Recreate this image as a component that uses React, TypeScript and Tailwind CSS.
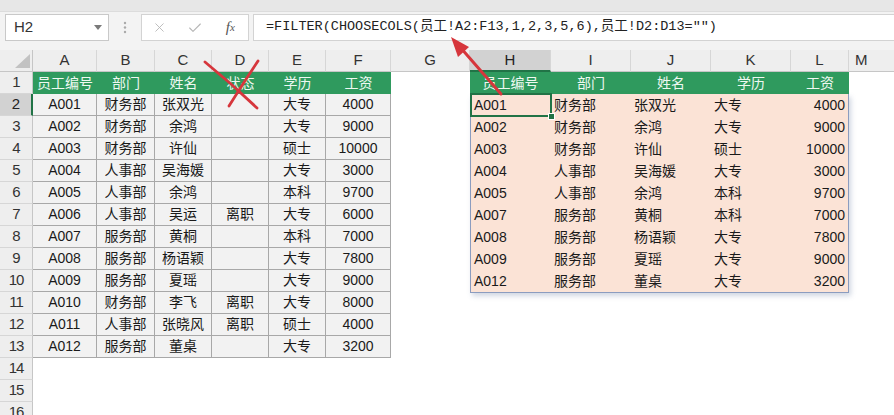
import React from 'react';
import { X, Check } from 'lucide-react';

const cellFont = "font-['Liberation_Sans','Noto_Sans_CJK_SC',sans-serif]";

const colHeaders: { label: string; w: string; active?: boolean }[] = [
  { label: 'A', w: 'w-[64px]' },
  { label: 'B', w: 'w-[58px]' },
  { label: 'C', w: 'w-[57px]' },
  { label: 'D', w: 'w-[57px]' },
  { label: 'E', w: 'w-[57px]' },
  { label: 'F', w: 'w-[65px]' },
  { label: 'G', w: 'w-[79px]' },
  { label: 'H', w: 'w-[81px]', active: true },
  { label: 'I', w: 'w-[80px]' },
  { label: 'J', w: 'w-[80px]' },
  { label: 'K', w: 'w-[80px]' },
  { label: 'L', w: 'w-[58px]' },
];

const leftW = ['w-[64px]', 'w-[58px]', 'w-[57px]', 'w-[57px]', 'w-[57px]', 'w-[65px]'];
const leftHead = ['员工编号', '部门', '姓名', '状态', '学历', '工资'];
const leftData: string[][] = [
  ['A001', '财务部', '张双光', '', '大专', '4000'],
  ['A002', '财务部', '余鸿', '', '大专', '9000'],
  ['A003', '财务部', '许仙', '', '硕士', '10000'],
  ['A004', '人事部', '吴海媛', '', '大专', '3000'],
  ['A005', '人事部', '余鸿', '', '本科', '9700'],
  ['A006', '人事部', '吴运', '离职', '大专', '6000'],
  ['A007', '服务部', '黄桐', '', '本科', '7000'],
  ['A008', '服务部', '杨语颖', '', '大专', '7800'],
  ['A009', '服务部', '夏瑶', '', '大专', '9000'],
  ['A010', '财务部', '李飞', '离职', '大专', '8000'],
  ['A011', '人事部', '张晓风', '离职', '硕士', '4000'],
  ['A012', '服务部', '董桌', '', '大专', '3200'],
];

const rightHeadW = ['w-[81px]', 'w-[80px]', 'w-[80px]', 'w-[80px]', 'w-[58px]'];
const rightBodyW = ['w-[80px]', 'w-[80px]', 'w-[80px]', 'w-[80px]', 'w-[57px]'];
const rightHead = ['员工编号', '部门', '姓名', '学历', '工资'];
const rightData: string[][] = leftData
  .filter((r) => r[3] === '')
  .map((r) => [r[0], r[1], r[2], r[4], r[5]]);

const rows = Array.from({ length: 16 }, (_, i) => i + 1);

function FormulaBar() {
  return (
    <div className="flex flex-col">
      <div className="h-[12px] bg-[#e7e7e7] border-b border-[#dcdcdc]" />
      <div className="h-[38px] bg-[#f3f3f3] flex items-start pt-[2px]">
        <div className="ml-[5px] w-[104px] h-[27px] bg-white border border-[#c9c9c9] flex items-center justify-between pl-[8px] pr-[6px]">
          <span className={`${cellFont} text-[15px] text-[#333]`}>H2</span>
          <svg width="8" height="5" viewBox="0 0 8 5">
            <polygon points="0,0 8,0 4,5" fill="#7a7a7a" />
          </svg>
        </div>
        <div className="w-[32px] h-[27px] flex items-center justify-center">
          <svg width="4" height="13" viewBox="0 0 4 13">
            <circle cx="2" cy="2" r="1.2" fill="#a9a9a9" />
            <circle cx="2" cy="6.5" r="1.2" fill="#a9a9a9" />
            <circle cx="2" cy="11" r="1.2" fill="#a9a9a9" />
          </svg>
        </div>
        <div className="w-[108px] h-[27px] bg-white border border-[#d3d3d3] flex items-center">
          <span className="w-[36px] flex justify-center">
            <X size={15} strokeWidth={1.4} color="#b5b5b5" />
          </span>
          <span className="w-[36px] flex justify-center">
            <Check size={16} strokeWidth={1.6} color="#b5b5b5" />
          </span>
          <span className="w-[36px] flex justify-center font-['Liberation_Serif',serif] italic text-[15px] text-[#555] leading-none">
            f<span className="text-[11px] translate-y-[2px]">x</span>
          </span>
        </div>
        <div className="ml-[4px] flex-1 h-[27px] bg-white border-y border-l border-[#d3d3d3] flex items-center pl-[12px]">
          <span className="font-['Liberation_Mono','Noto_Sans_CJK_SC',monospace] text-[13.5px] text-[#222] whitespace-pre">
            {'=FILTER(CHOOSECOLS(员工!A2:F13,1,2,3,5,6),员工!D2:D13="")'}
          </span>
        </div>
      </div>
    </div>
  );
}

function ColumnHeaderRow() {
  return (
    <div className={`flex h-[22px] bg-[#eeeeee] ${cellFont}`}>
      <div className="w-[33px] h-full border-r border-b border-[#c6c6c6] flex items-end justify-end pr-[2px] pb-[3px]">
        <svg width="15" height="14" viewBox="0 0 15 14">
          <polygon points="15,0 15,14 0,14" fill="#c2c2c2" />
        </svg>
      </div>
      {colHeaders.map((c) => (
        <div
          key={c.label}
          className={`${c.w} h-full flex items-center justify-center text-[15px] border-r border-[#d6d6d6] ${
            c.active ? 'bg-[#d2d2d2] border-b-2 border-b-[#217346] text-[#222]' : 'border-b border-b-[#c6c6c6] text-[#333]'
          }`}
        >
          {c.label}
        </div>
      ))}
      <div className="flex-1 h-full border-b border-[#c6c6c6] flex items-center pl-[6px] text-[15px] text-[#333]">M</div>
    </div>
  );
}

function RowHeaders() {
  return (
    <div className={`w-[33px] flex flex-col ${cellFont}`}>
      {rows.map((r) => (
        <div
          key={r}
          className={`h-[22px] shrink-0 flex items-center justify-center text-[15px] tracking-[-1px] border-b border-[#d6d6d6] ${
            r === 2 ? 'bg-[#d2d2d2] border-r-2 border-r-[#217346] text-[#222]' : 'bg-[#eeeeee] border-r border-r-[#c6c6c6] text-[#333]'
          }`}
        >
          {r}
        </div>
      ))}
    </div>
  );
}

function LeftTable() {
  return (
    <div className={`flex flex-col ${cellFont} text-[14px]`}>
      <div className="flex h-[22px] bg-[#2f9a5e]">
        {leftHead.map((h, i) => (
          <div key={i} className={`${leftW[i]} h-full flex items-center justify-center text-[#eef8f1]`}>
            {h}
          </div>
        ))}
      </div>
      {leftData.map((row, ri) => (
        <div key={ri} className="flex h-[22px]">
          {row.map((v, ci) => (
            <div
              key={ci}
              className={`${leftW[ci]} h-full flex items-center justify-center bg-[#f2f2f2] border-r border-b border-[#a8a8a8] text-[#1a1a1a]`}
            >
              {v}
            </div>
          ))}
        </div>
      ))}
    </div>
  );
}

function RightTable() {
  return (
    <div className={`flex flex-col ${cellFont} text-[14px]`}>
      <div className="flex h-[22px] bg-[#2f9a5e]">
        {rightHead.map((h, i) => (
          <div key={i} className={`${rightHeadW[i]} h-full flex items-center justify-center text-[#eef8f1]`}>
            {h}
          </div>
        ))}
      </div>
      <div className="flex flex-col bg-[#fbe3d6] border-x border-b border-[#8b9cbf] shadow-[2px_3px_5px_rgba(90,110,150,0.28)]">
        {rightData.map((row, ri) => (
          <div key={ri} className="flex h-[22px]">
            {row.map((v, ci) => (
              <div
                key={ci}
                className={`${rightBodyW[ci]} h-full flex items-center text-[#1a1a1a] ${
                  ci === 4 ? 'justify-end pr-[3px]' : 'justify-start pl-[3px]'
                } ${ri === 0 && ci === 0 ? 'relative' : ''}`}
              >
                {v}
                {ri === 0 && ci === 0 && (
                  <>
                    <div className="absolute -left-[1px] -top-[1px] -right-[1px] -bottom-[1px] border-2 border-[#217346]" />
                    <div className="absolute -right-[4px] -bottom-[4px] w-[7px] h-[7px] bg-[#217346] border border-white" />
                  </>
                )}
              </div>
            ))}
          </div>
        ))}
      </div>
    </div>
  );
}

function Annotations() {
  const red = '#d6363c';
  return (
    <svg className="absolute left-0 top-0 pointer-events-none" width="894" height="415" viewBox="0 0 894 415">
      <path d="M205 62 Q232 84 257 108" stroke={red} strokeWidth="2.8" fill="none" strokeLinecap="round" />
      <path d="M258 61 Q244 82 229 106" stroke={red} strokeWidth="2.8" fill="none" strokeLinecap="round" />
      <line x1="501" y1="94" x2="460" y2="47" stroke={red} strokeWidth="3" strokeLinecap="round" />
      <polygon points="451,37 469,47 458,57" fill={red} />
    </svg>
  );
}

export default function App() {
  return (
    <div className="relative w-[894px] h-[415px] overflow-hidden bg-white">
      <FormulaBar />
      <ColumnHeaderRow />
      <div className="flex">
        <RowHeaders />
        <div className="flex items-start">
          <LeftTable />
          <div className="w-[79px] shrink-0" />
          <RightTable />
        </div>
      </div>
      <Annotations />
    </div>
  );
}
